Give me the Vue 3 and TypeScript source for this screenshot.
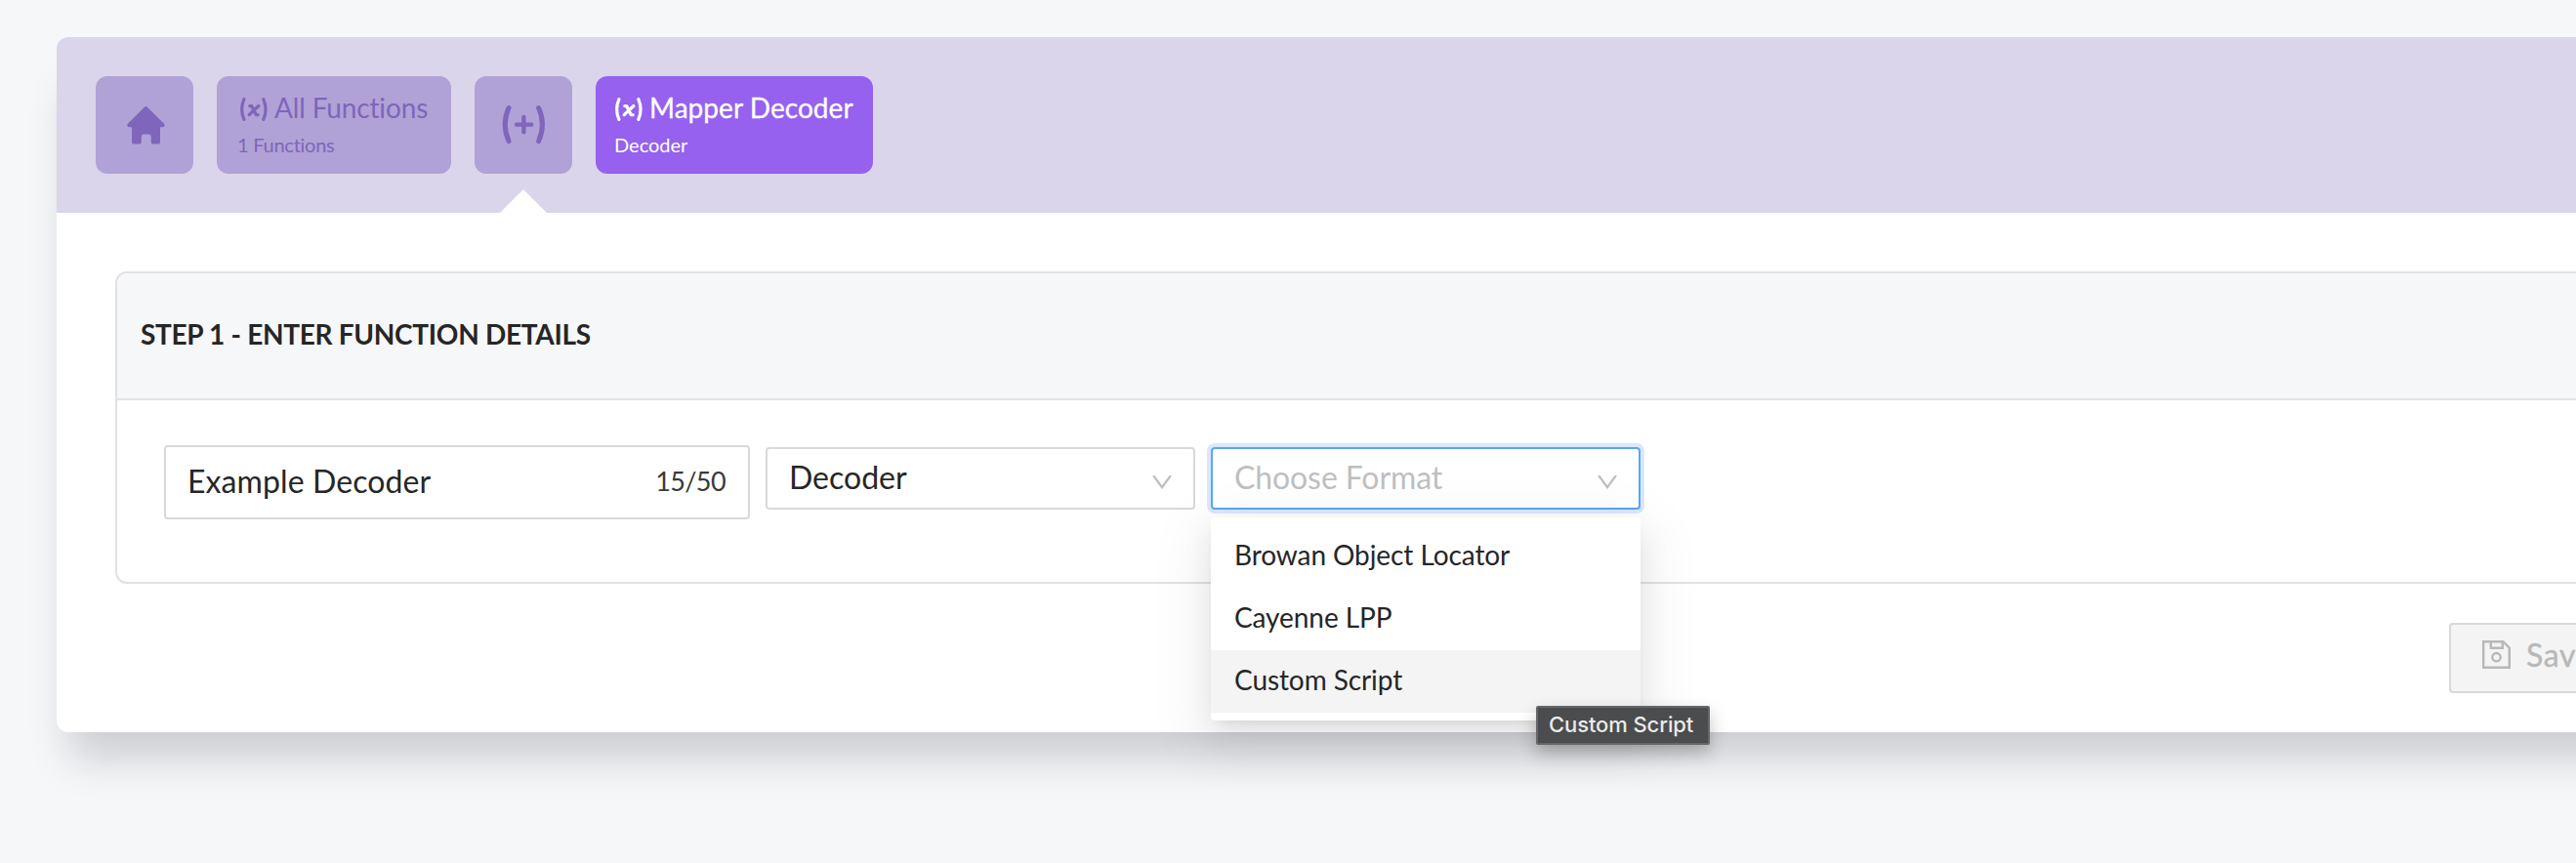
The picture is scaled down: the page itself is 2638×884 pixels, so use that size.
<script setup lang="ts">
import { ref } from 'vue'

const name = ref('Example Decoder')
const maxLength = 50
const formats: string[] = ['Browan Object Locator', 'Cayenne LPP', 'Custom Script']
const hovered = 'Custom Script'
</script>

<template>
  <div class="page">
    <main class="card">
      <nav class="tabs">
        <a class="tile square">
          <svg class="home" width="40" height="40" viewBox="0 0 40 40">
            <path d="M20.4 3.2 3.2 20.2H37.6Z" stroke="currentColor" stroke-width="4" stroke-linejoin="round" fill="currentColor" />
            <path d="M6 19H35V37.4a2.2 2.2 0 0 1-2.2 2.2H27.9a2.2 2.2 0 0 1-2.2-2.2V32a2.4 2.4 0 0 0-2.4-2.4H18.2A2.4 2.4 0 0 0 15.8 32v5.4a2.2 2.2 0 0 1-2.2 2.2H8.2A2.2 2.2 0 0 1 6 37.4Z" fill="currentColor" />
          </svg>
        </a>
        <a class="tile all">
          <div class="title">
            <svg class="fx" width="28" height="24" viewBox="0 0 28 24">
              <path d="M3.9 1.6Q-.6 12 3.9 22.4M23.8 1.6Q28.3 12 23.8 22.4" />
              <path class="x" d="M9.8 8.6H11.6L16.2 17.6H18.2M18.8 8.6 14 12.9 9.2 17.6" />
            </svg>
            <span class="all-text">All Functions</span>
          </div>
          <div class="sub sub-count">1 Functions</div>
        </a>
        <a class="tile square current">
          <svg class="plus" width="44" height="40" viewBox="0 0 44 40">
            <path d="M7 2.6Q-.6 19.6 7 36.6M37.6 2.6Q45.2 19.6 37.6 36.6" stroke-width="5" />
            <path d="M14.9 19.6H30.3M22.4 11.9V27.3" stroke-width="4.4" />
          </svg>
        </a>
        <a class="tile active">
          <div class="title">
            <svg class="fx" width="28" height="24" viewBox="0 0 28 24">
              <path d="M3.9 1.6Q-.6 12 3.9 22.4M23.8 1.6Q28.3 12 23.8 22.4" />
              <path class="x" d="M9.8 8.6H11.6L16.2 17.6H18.2M18.8 8.6 14 12.9 9.2 17.6" />
            </svg>
            <span class="mapper-text">Mapper Decoder</span>
          </div>
          <div class="sub sub-type">Decoder</div>
        </a>
      </nav>

      <div class="content">
        <section class="panel">
          <header class="panel-head">STEP 1 - ENTER FUNCTION DETAILS</header>
          <div class="panel-body">
            <div class="input">
              <span class="value">{{ name }}</span>
              <span class="count">{{ name.length }}/{{ maxLength }}</span>
            </div>
            <div class="select">
              <span>Decoder</span>
              <svg class="chevron" width="20" height="14" viewBox="0 0 20 14"><path d="M1.1 0 10 12.2 18.9 0" /></svg>
            </div>
            <div class="select focused">
              <span class="placeholder">Choose Format</span>
              <svg class="chevron" width="20" height="14" viewBox="0 0 20 14"><path d="M1.1 0 10 12.2 18.9 0" /></svg>
              <div class="dropdown">
                <div v-for="f in formats" :key="f" class="option" :class="{ hover: f === hovered }">{{ f }}</div>
                <div class="tooltip">{{ hovered }}</div>
              </div>
            </div>
          </div>
        </section>
        <footer class="actions">
          <button class="save" disabled>
            <svg width="29" height="29" viewBox="0 0 29 29">
              <path d="M1.2 1.2H21.3L27.8 7.7V27.8H1.2ZM8.8 1.2V7.8H20.8V1.2" />
              <circle cx="14.5" cy="17.2" r="4.2" />
            </svg>
            <span>Save</span>
          </button>
        </footer>
      </div>
    </main>
  </div>
</template>

<style>
body {
  background: #f5f7f9;
}
</style>

<style scoped>
.page {
  box-sizing: border-box;
  width: 2638px;
  height: 884px;
  padding: 38px 0 0 58px;
  overflow: hidden;
  background: #f5f7f9;
  font-family: Lato, 'Open Sans', sans-serif;
  font-size: 28px;
  font-variant-ligatures: none;
  color: #262626;
}
.card {
  width: 2682px;
  height: 712px;
  border-radius: 12px;
  background: #fff;
  box-shadow: 0 40px 40px -14px rgba(20, 22, 31, 0.19);
}
.tabs {
  box-sizing: border-box;
  height: 180px;
  padding: 40px;
  display: flex;
  gap: 24px;
  border-radius: 12px 12px 0 0;
  background: #dad5eb;
}
.tile {
  box-sizing: border-box;
  height: 100px;
  padding: 12px 20px 0;
  border-radius: 12px;
  background: #b0a2d6;
  color: #7f65bb;
  white-space: nowrap;
}
.square {
  width: 100px;
  padding: 0;
  display: flex;
  align-items: center;
  justify-content: center;
}
.home {
  margin-left: 2px;
}
.plus,
.fx {
  fill: none;
  stroke: currentColor;
  stroke-linecap: round;
  stroke-linejoin: round;
}
.fx {
  flex: none;
  margin-top: 4px;
  stroke-width: 3.2;
}
.fx .x {
  stroke-width: 3.3;
}
.all {
  width: 240px;
}
.all .fx {
  margin-left: 4px;
}
.active {
  width: 284px;
  background: #9561ee;
  color: #fff;
}
.current {
  position: relative;
}
.current::after {
  content: '';
  position: absolute;
  left: 26px;
  top: 116px;
  border: 24px solid transparent;
  border-top: 0;
  border-bottom-color: #fff;
}
.title {
  display: flex;
  align-items: center;
  gap: 7px;
  height: 40px;
  line-height: 40px;
}
.all-text {
  letter-spacing: -0.15px;
}
.mapper-text {
  letter-spacing: 0.05px;
  -webkit-text-stroke: 0.3px currentColor;
}
.sub {
  margin-top: 4px;
  font-size: 20px;
  line-height: 28px;
}
.sub-type {
  margin-left: -1px;
}
.sub-count {
  margin-left: 1px;
  letter-spacing: -0.25px;
}
.content {
  padding: 60px 60px 0;
}
.panel {
  box-sizing: border-box;
  height: 320px;
  border: 2px solid #e1e1e6;
  border-radius: 12px;
}
.panel-head {
  box-sizing: border-box;
  height: 130px;
  padding: 0 24px 5px;
  display: flex;
  align-items: center;
  border-bottom: 2px solid #e1e1e6;
  border-radius: 10px 10px 0 0;
  background: #f6f7f9;
  font-weight: 700;
  letter-spacing: -0.3px;
}
.panel-body {
  padding: 46px 48px;
  display: flex;
  align-items: flex-start;
  gap: 16px;
}
.input {
  box-sizing: border-box;
  width: 600px;
  height: 76px;
  padding: 0 23px 3px 22px;
  display: flex;
  align-items: center;
  justify-content: space-between;
  border: 2px solid #d9d9d9;
  border-radius: 4px;
  background: #fff;
}
.value {
  font-size: 32px;
  letter-spacing: 0.1px;
}
.count {
  font-size: 27px;
  letter-spacing: -0.6px;
  color: #3a3a3a;
}
.select {
  box-sizing: border-box;
  position: relative;
  width: 440px;
  height: 64px;
  margin-top: 2px;
  padding: 0 22px 3px;
  display: flex;
  align-items: center;
  justify-content: space-between;
  border: 2px solid #d9d9d9;
  border-radius: 4px;
  background: #fff;
  font-size: 32px;
}
.focused {
  border-color: #58a7f6;
  box-shadow: 0 0 0 4px #dae8fc;
}
.placeholder {
  color: #bfbfbf;
  letter-spacing: -0.1px;
}
.chevron {
  margin-top: 10px;
  fill: none;
  stroke: #bfbfbf;
  stroke-width: 2.3;
}
.dropdown {
  box-sizing: border-box;
  position: absolute;
  z-index: 1;
  left: -2px;
  top: 70px;
  width: 440px;
  padding: 8px 0;
  border-radius: 4px;
  background: #fff;
  font-size: 28px;
  box-shadow:
    0 6px 12px -8px rgba(0, 0, 0, 0.12),
    0 12px 32px 0 rgba(0, 0, 0, 0.08),
    0 18px 56px 16px rgba(0, 0, 0, 0.05);
}
.option {
  box-sizing: border-box;
  height: 64px;
  padding: 0 24px 5px;
  display: flex;
  align-items: center;
  letter-spacing: -0.08px;
}
.option.hover {
  background: #f4f4f4;
}
.tooltip {
  box-sizing: border-box;
  position: absolute;
  left: 333px;
  top: 193px;
  width: 178px;
  height: 40px;
  padding: 0 0 2px 11px;
  display: flex;
  align-items: center;
  border: 2px solid #666768;
  border-radius: 2px;
  background: #4b4c4d;
  box-shadow: 0 8px 18px rgba(0, 0, 0, 0.25);
  color: #e9ebea;
  font-family: Inter, sans-serif;
  font-size: 22px;
  font-weight: 500;
  letter-spacing: -0.1px;
  white-space: nowrap;
}
.actions {
  padding-top: 40px;
  display: flex;
  justify-content: flex-end;
}
.save {
  box-sizing: border-box;
  width: 172px;
  height: 72px;
  padding: 0 0 8px 32px;
  display: flex;
  align-items: center;
  gap: 16px;
  border: 2px solid #d9d9d9;
  border-radius: 4px;
  background: #f4f4f4;
  color: #b8b8b8;
  font-family: inherit;
  font-size: 32px;
  letter-spacing: 0.6px;
}
.save span {
  -webkit-text-stroke: 0.4px currentColor;
}
.save svg {
  flex: none;
  fill: none;
  stroke: currentColor;
  stroke-width: 2.4;
}
</style>
